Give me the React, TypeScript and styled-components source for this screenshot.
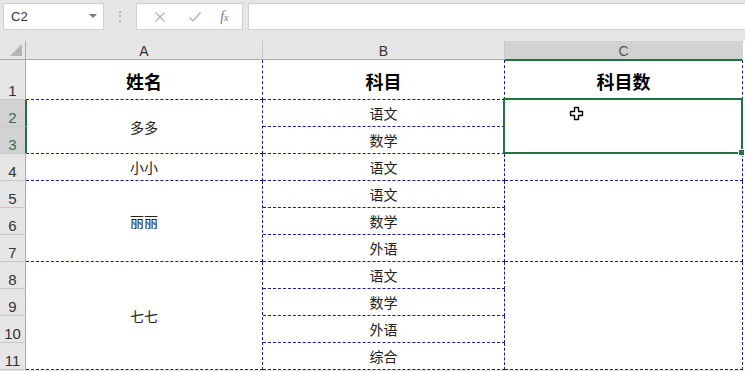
import styled, { createGlobalStyle } from 'styled-components';

const GlobalStyle = createGlobalStyle`
  html, body { margin: 0; padding: 0; background: #fff; }
  body { font-family: "Liberation Sans", "Noto Sans CJK SC", sans-serif; }
`;

const DASH = '1px dashed #1b1b8f';
const GREEN = '#217346';

type Row = { a?: string; aSpan?: number; b: string; c?: boolean; cSpan?: number };

// 表格数据（第1行为表头）
const rows: Row[] = [
  { a: '多多', aSpan: 2, b: '语文', c: true, cSpan: 2 },
  { b: '数学' },
  { a: '小小', aSpan: 1, b: '语文', c: true, cSpan: 1 },
  { a: '丽丽', aSpan: 3, b: '语文', c: true, cSpan: 3 },
  { b: '数学' },
  { b: '外语' },
  { a: '七七', aSpan: 4, b: '语文', c: true, cSpan: 4 },
  { b: '数学' },
  { b: '外语' },
  { b: '综合' },
];

export default function App() {
  return (
    <Page>
      <GlobalStyle />
      <FormulaBar>
        <NameBox>
          <span>C2</span>
          <Caret />
        </NameBox>
        <Grip>⋮</Grip>
        <FxButtons>
          <FxIcon>
            <svg width="12" height="12" viewBox="0 0 12 12">
              <path d="M1.5 1.5 L10.5 10.5 M10.5 1.5 L1.5 10.5" stroke="#b5b5b5" strokeWidth="1.3" fill="none" />
            </svg>
          </FxIcon>
          <FxIcon>
            <svg width="14" height="12" viewBox="0 0 14 12">
              <path d="M1.5 6.5 L5 10 L12.5 1.5" stroke="#b5b5b5" strokeWidth="1.4" fill="none" />
            </svg>
          </FxIcon>
          <FxLabel>
            f<sub>x</sub>
          </FxLabel>
        </FxButtons>
        <FormulaInput />
      </FormulaBar>
      <Spacer />
      <Sheet>
        <Corner>
          <svg width="12" height="12" viewBox="0 0 12 12">
            <polygon points="12,0 12,12 0,12" fill="#b4b4b4" />
          </svg>
        </Corner>
        <ColHead>A</ColHead>
        <ColHead>B</ColHead>
        <ColHead $active>C</ColHead>

        <RowHead $row={2}>1</RowHead>
        <HeadCell $col={2} $row={2}>姓名</HeadCell>
        <HeadCell $col={3} $row={2}>科目</HeadCell>
        <HeadCell $col={4} $row={2}>科目数</HeadCell>

        {rows.map((r, i) => {
          const gr = i + 3;
          return [
            <RowHead key={`h${i}`} $row={gr} $active={i === 0 || i === 1}>
              {i + 2}
            </RowHead>,
            r.a !== undefined && (
              <Cell key={`a${i}`} $col={2} $row={gr} $span={r.aSpan}>
                {r.a}
              </Cell>
            ),
            <Cell key={`b${i}`} $col={3} $row={gr}>
              {r.b}
            </Cell>,
            r.c && (
              <Cell key={`c${i}`} $col={4} $row={gr} $span={r.cSpan}>
                {i === 0 && (
                  <>
                    <Selection>
                      <FillHandle />
                    </Selection>
                    <Cursor>
                      <svg width="15" height="15" viewBox="0 0 15 15">
                        <path
                          d="M5.5 1.5 H9.5 V5.5 H13.5 V9.5 H9.5 V13.5 H5.5 V9.5 H1.5 V5.5 H5.5 Z"
                          fill="#fff"
                          stroke="#000"
                          strokeWidth="1.4"
                          strokeLinejoin="round"
                        />
                      </svg>
                    </Cursor>
                  </>
                )}
              </Cell>
            ),
          ];
        })}
      </Sheet>
    </Page>
  );
}

const Page = styled.div`
  width: 745px;
  height: 371px;
  overflow: hidden;
  background: #e6e6e6;
`;

const FormulaBar = styled.div`
  display: flex;
  height: 34px;
  padding: 3px 0 0 3px;
  box-sizing: border-box;
  align-items: flex-start;
`;

const NameBox = styled.div`
  width: 101px;
  height: 27px;
  box-sizing: border-box;
  background: #fff;
  border: 1px solid #d0d0d0;
  display: flex;
  align-items: center;
  justify-content: space-between;
  padding: 0 6px 0 7px;
  font-size: 13px;
  color: #333;
`;

const Caret = styled.span`
  width: 0;
  height: 0;
  border-left: 4px solid transparent;
  border-right: 4px solid transparent;
  border-top: 4px solid #777;
  margin-top: -2px;
`;

const Grip = styled.div`
  width: 32px;
  height: 27px;
  line-height: 27px;
  text-align: center;
  color: #a8a8a8;
  font-size: 14px;
`;

const FxButtons = styled.div`
  width: 107px;
  height: 27px;
  box-sizing: border-box;
  background: #fff;
  border: 1px solid #d0d0d0;
  display: flex;
  align-items: center;
  justify-content: space-around;
  padding: 0 6px;
`;

const FxIcon = styled.div`
  width: 20px;
  display: flex;
  justify-content: center;
`;

const FxLabel = styled.div`
  font-family: "Liberation Serif", serif;
  font-style: italic;
  font-size: 14px;
  color: #777;
  sub {
    font-size: 10px;
    vertical-align: baseline;
  }
`;

const FormulaInput = styled.div`
  flex: 1;
  margin-left: 5px;
  height: 27px;
  background: #fff;
  border: 1px solid #d0d0d0;
  border-right: none;
  box-sizing: border-box;
`;

const Spacer = styled.div`
  height: 7px;
`;

const Sheet = styled.div`
  display: grid;
  grid-template-columns: 26px 237px 242px 238px 2px;
  grid-template-rows: 19px 40px repeat(10, 27px);
  background: #fff;
  font-family: "Noto Sans CJK SC", sans-serif;
`;

const Corner = styled.div`
  grid-column: 1;
  grid-row: 1;
  background: #e6e6e6;
  border-right: 1px solid #ababab;
  border-bottom: 1px solid #ababab;
  display: flex;
  align-items: flex-end;
  justify-content: flex-end;
  padding: 0 3px 3px 0;
`;

const ColHead = styled.div<{ $active?: boolean }>`
  grid-row: 1;
  background: ${(p) => (p.$active ? '#d2d2d2' : '#e6e6e6')};
  border-right: 1px solid ${(p) => (p.$active ? '#d2d2d2' : '#c6c6c6')};
  border-bottom: ${(p) => (p.$active ? `2px solid ${GREEN}` : '1px solid #ababab')};
  margin-bottom: ${(p) => (p.$active ? '-1px' : '0')};
  font-family: "Liberation Sans", sans-serif;
  font-size: 14px;
  color: ${(p) => (p.$active ? '#555' : '#333')};
  display: flex;
  align-items: center;
  justify-content: center;
  line-height: 1;
  padding-top: 2px;
  z-index: 1;
`;

const RowHead = styled.div<{ $row: number; $active?: boolean }>`
  grid-column: 1;
  grid-row: ${(p) => p.$row};
  background: ${(p) => (p.$active ? '#d2d2d2' : '#e6e6e6')};
  border-right: ${(p) => (p.$active ? `2px solid ${GREEN}` : '1px solid #ababab')};
  margin-right: ${(p) => (p.$active ? '-1px' : '0')};
  border-bottom: 1px solid #c8c8c8;
  font-family: "Liberation Sans", sans-serif;
  font-size: 15px;
  color: ${(p) => (p.$active ? '#3a6a4c' : '#333')};
  display: flex;
  align-items: flex-end;
  justify-content: center;
  line-height: 1;
  padding-bottom: 1px;
  z-index: 1;
`;

const Cell = styled.div<{ $col: number; $row: number; $span?: number }>`
  position: relative;
  grid-column: ${(p) => p.$col};
  grid-row: ${(p) => p.$row} / span ${(p) => p.$span ?? 1};
  border-right: ${DASH};
  border-bottom: ${DASH};
  display: flex;
  align-items: center;
  justify-content: center;
  font-size: 14px;
  color: #222;
`;

const HeadCell = styled(Cell)`
  font-size: 18px;
  font-weight: bold;
  padding-top: 2px;
  color: #000;
`;

const Selection = styled.div`
  position: absolute;
  left: -2px;
  top: -2px;
  right: -1px;
  bottom: -1px;
  border: 2px solid ${GREEN};
  z-index: 2;
`;

const FillHandle = styled.div`
  position: absolute;
  right: -4px;
  bottom: -4px;
  width: 5px;
  height: 5px;
  background: ${GREEN};
  border: 1px solid #fff;
`;

const Cursor = styled.div`
  position: absolute;
  left: 64px;
  top: 6px;
  z-index: 3;
  line-height: 0;
`;
